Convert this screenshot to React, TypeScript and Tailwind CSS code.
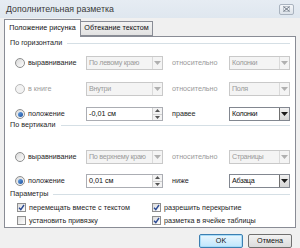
import React from 'react';

const Radio = ({ checked = false, disabled = false }: { checked?: boolean; disabled?: boolean }) => (
    <span
        className={`flex h-[10px] w-[10px] shrink-0 items-center justify-center rounded-full border ${
            disabled ? 'border-[#b8b8b8] bg-[#f2f2f2]' : 'border-[#8e8f8f] bg-gradient-to-br from-[#d8d8d8] to-[#ffffff]'
        }`}
    >
        {checked && <span className="h-[5px] w-[5px] rounded-full bg-gradient-to-br from-[#6aa6e8] to-[#1c4f9c]" />}
    </span>
);

const Arrow = ({ enabled }: { enabled: boolean }) => (
    <svg width="7" height="4" viewBox="0 0 7 4">
        <path d="M0 0 L7 0 L3.5 4 Z" fill={enabled ? '#1a1a1a' : '#b0b0b0'} />
    </svg>
);

const Select = ({ value, enabled = false, w }: { value: string; enabled?: boolean; w: string }) => (
    <div
        className={`flex h-[14px] items-center border ${w} ${
            enabled ? 'border-[#828790] bg-white text-[#111]' : 'border-[#c9c9c9] bg-[#f4f4f4] text-[#9a9a9a]'
        }`}
    >
        <span className="flex-1 overflow-hidden whitespace-nowrap pl-[2px] leading-none tracking-[-0.3px]">{value}</span>
        <span
            className={`flex h-full w-[10px] shrink-0 items-center justify-center border-l ${
                enabled ? 'border-[#707070] bg-gradient-to-b from-[#f2f2f2] to-[#d5d5d5]' : 'border-[#dadada] bg-[#f4f4f4]'
            }`}
        >
            <Arrow enabled={enabled} />
        </span>
    </div>
);

const Spin = ({ value }: { value: string }) => (
    <div className="flex h-[14px] w-[77px] items-center border border-[#abadb3] bg-white text-[#111]">
        <span className="flex-1 whitespace-nowrap pl-[2px] leading-none">{value}</span>
        <span className="flex h-full w-[10px] flex-col border-l border-[#d0d0d0]">
            <span className="flex flex-1 items-center justify-center border-b border-[#d0d0d0] bg-[#f3f3f3]">
                <svg width="5" height="3" viewBox="0 0 5 3">
                    <path d="M0 3 L5 3 L2.5 0 Z" fill="#555" />
                </svg>
            </span>
            <span className="flex flex-1 items-center justify-center bg-[#f3f3f3]">
                <svg width="5" height="3" viewBox="0 0 5 3">
                    <path d="M0 0 L5 0 L2.5 3 Z" fill="#555" />
                </svg>
            </span>
        </span>
    </div>
);

const GroupHeader = ({ label, className = '' }: { label: string; className?: string }) => (
    <div className={`flex h-[10px] items-center pl-[5px] pr-[5px] ${className}`}>
        <span className="whitespace-nowrap leading-none text-[#1e1e1e]">{label}</span>
        <span className="ml-[5px] h-px flex-1 bg-[#d5dfe5]" />
    </div>
);

const Check = ({ checked, label }: { checked: boolean; label: string }) => (
    <div className="flex h-[13px] items-center">
        <span className="flex h-[9px] w-[9px] shrink-0 items-center justify-center border border-[#8f8f8f] bg-gradient-to-br from-[#dcdcdc] to-[#ffffff]">
            {checked && (
                <svg width="7" height="7" viewBox="0 0 7 7">
                    <path d="M1 3.8 L2.8 5.6 L6 1" stroke="#2b4a94" strokeWidth="1.4" fill="none" />
                </svg>
            )}
        </span>
        <span className="ml-[3px] whitespace-nowrap leading-none text-[#1e1e1e]">{label}</span>
    </div>
);

const Row = ({
    radio,
    label,
    disabled = false,
    control,
    rel,
    relDisabled = false,
    target,
    className = '',
}: {
    radio?: boolean;
    label: string;
    disabled?: boolean;
    control: React.ReactNode;
    rel: string;
    relDisabled?: boolean;
    target: React.ReactNode;
    className?: string;
}) => (
    <div className={`flex h-[14px] items-center ${className}`}>
        <span className="ml-[10px]">
            <Radio checked={radio} disabled={disabled} />
        </span>
        <span className={`ml-[3px] w-[58px] whitespace-nowrap leading-none ${disabled ? 'text-[#9a9a9a]' : 'text-[#1e1e1e]'}`}>
            {label}
        </span>
        {control}
        <span className={`ml-[9px] w-[57px] whitespace-nowrap leading-none ${relDisabled ? 'text-[#9a9a9a]' : 'text-[#1e1e1e]'}`}>
            {rel}
        </span>
        {target}
    </div>
);

export default function App() {
    return (
        <div className="flex h-[248px] w-[300px] flex-col overflow-hidden bg-[#f0f0f0] font-['Liberation_Sans',Arial,sans-serif] text-[7.2px]">
            {/* заголовок окна */}
            <div className="flex h-[18px] items-center bg-gradient-to-b from-[#e6ecf3] to-[#dfe7ef] pl-[6px] pr-[6px]">
                <span className="flex-1 whitespace-nowrap text-[8.8px] leading-none text-[#3a3a3a]">Дополнительная разметка</span>
                <span className="flex h-[11px] w-[15px] items-center justify-center rounded-[2px] border border-[#a9b3bf] bg-gradient-to-b from-[#f4f6f9] to-[#dde3ea]">
                    <svg width="7" height="6" viewBox="0 0 7 6">
                        <path d="M0.5 0.5 L6.5 5.5 M6.5 0.5 L0.5 5.5" stroke="#6b7480" strokeWidth="1" />
                        <rect x="0.5" y="0.5" width="6" height="5" stroke="#9aa3ad" strokeWidth="0.6" fill="none" />
                    </svg>
                </span>
            </div>

            {/* вкладки */}
            <div className="flex h-[18px] items-end pl-[4px]">
                <div className="relative z-10 -mb-px flex h-[18px] w-[77px] items-center justify-center whitespace-nowrap border border-b-0 border-[#898c95] bg-white text-[#111]">
                    Положение рисунка
                </div>
                <div className="flex h-[15px] w-[72px] items-center justify-center whitespace-nowrap border border-l-0 border-[#898c95] bg-gradient-to-b from-[#f3f3f3] to-[#e2e2e2] text-[#111]">
                    Обтекание текстом
                </div>
            </div>

            {/* содержимое вкладки */}
            <div className="ml-[4px] flex h-[192px] w-[292px] flex-col border border-[#898c95] bg-white">
                <GroupHeader label="По горизонтали" className="mt-[1px]" />
                <Row
                    className="mt-[8px]"
                    label="выравнивание"
                    control={<Select value="По левому краю" w="w-[77px]" />}
                    rel="относительно"
                    relDisabled
                    target={<Select value="Колонки" w="w-[61px]" />}
                />
                <Row
                    className="mt-[12px]"
                    label="в книге"
                    disabled
                    control={<Select value="Внутри" w="w-[77px]" />}
                    rel="относительно"
                    relDisabled
                    target={<Select value="Поля" w="w-[61px]" />}
                />
                <Row
                    className="mt-[11px]"
                    radio
                    label="положение"
                    control={<Spin value="-0,01 см" />}
                    rel="правее"
                    target={<Select value="Колонки" enabled w="w-[61px]" />}
                />
                <GroupHeader label="По вертикали" className="-mt-[1px]" />
                <Row
                    className="mt-[20px]"
                    label="выравнивание"
                    control={<Select value="По верхнему краю" w="w-[77px]" />}
                    rel="относительно"
                    relDisabled
                    target={<Select value="Страницы" w="w-[61px]" />}
                />
                <Row
                    className="mt-[10px]"
                    radio
                    label="положение"
                    control={<Spin value="0,01 см" />}
                    rel="ниже"
                    target={<Select value="Абзаца" enabled w="w-[61px]" />}
                />
                <GroupHeader label="Параметры" className="mt-[1px]" />
                <div className="mt-[2px] grid grid-cols-[135px_1fr] pl-[12px]">
                    <Check checked label="перемещать вместе с текстом" />
                    <Check checked label="разрешить перекрытие" />
                    <Check checked={false} label="установить привязку" />
                    <Check checked label="разметка в ячейке таблицы" />
                </div>
            </div>

            {/* кнопки */}
            <div className="mt-[6px] flex justify-end gap-[5px] pr-[8px]">
                <button className="h-[14px] w-[44px] rounded-[2px] border border-[#3c7fb1] bg-gradient-to-b from-[#eaf6fd] to-[#bee6fd] leading-none text-[#111] shadow-[0_0_0_1px_#a8dcf8_inset]">
                    OK
                </button>
                <button className="h-[14px] w-[44px] rounded-[2px] border border-[#707070] bg-gradient-to-b from-[#f2f2f2] to-[#dcdcdc] leading-none text-[#111]">
                    Отмена
                </button>
            </div>
        </div>
    );
}
